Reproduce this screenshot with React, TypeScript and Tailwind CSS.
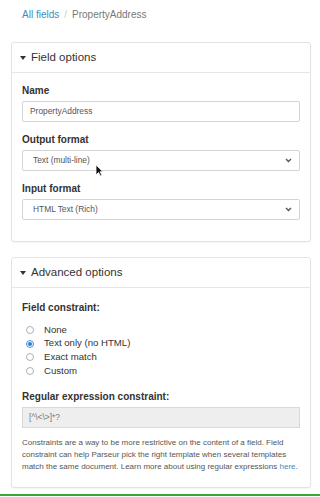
import React from "react";

function Caret() {
  return (
    <svg width="6" height="4" viewBox="0 0 6 4" className="mr-[5px] shrink-0" aria-hidden="true">
      <path d="M0 0h6L3 4z" fill="#333" />
    </svg>
  );
}

function Chevron() {
  return (
    <svg width="7" height="5" viewBox="0 0 7 5" aria-hidden="true">
      <path d="M1 1l2.5 2.5L6 1" fill="none" stroke="#555" strokeWidth="1.4" />
    </svg>
  );
}

function Panel({ title, children }: { title: string; children: React.ReactNode }) {
  return (
    <section className="rounded-[3px] border border-[#e3e3e3] bg-white shadow-[0_1px_1px_rgba(0,0,0,0.04)]">
      <header className="flex h-[30px] items-center border-b border-[#e6e6e6] pl-[8px] text-[11.5px] text-[#333]">
        <Caret />
        {title}
      </header>
      <div className="px-[10px]">{children}</div>
    </section>
  );
}

function Label({ children }: { children: React.ReactNode }) {
  return <div className="text-[10px] font-bold leading-[13px] text-[#333]">{children}</div>;
}

function FakeSelect({ value }: { value: string }) {
  return (
    <div className="mt-[4px] flex h-[21px] items-center justify-between rounded-[2px] border border-[#d4d4d4] bg-white pl-[10px] pr-[7px] text-[8.4px] text-[#555]">
      <span>{value}</span>
      <Chevron />
    </div>
  );
}

const options = ["None", "Text only (no HTML)", "Exact match", "Custom"];

export default function App() {
  return (
    <div className="relative h-[497px] w-[320px] overflow-hidden bg-white font-['Liberation_Sans',Arial,sans-serif]">
      {/* breadcrumb */}
      <nav className="flex h-[29px] items-center pl-[22px] text-[10px] text-[#777]">
        <span className="text-[#3a8cc0]">All fields</span>
        <span className="mx-[5px] text-[#ccc]">/</span>
        <span>PropertyAddress</span>
      </nav>

      <div className="mt-[13px] flex flex-col gap-[15px] pl-[11px] pr-[9px]">
        <Panel title="Field options">
          <div className="pb-[21px] pt-[11px]">
            <Label>Name</Label>
            <div className="mt-[4px] flex h-[21px] items-center rounded-[2px] border border-[#d4d4d4] pl-[7px] text-[8.4px] text-[#555]">
              PropertyAddress
            </div>
            <div className="mt-[11px]">
              <Label>Output format</Label>
              <FakeSelect value="Text (multi-line)" />
            </div>
            <div className="mt-[11px]">
              <Label>Input format</Label>
              <FakeSelect value="HTML Text (Rich)" />
            </div>
          </div>
        </Panel>

        <Panel title="Advanced options">
          <div className="pb-[14px] pt-[13px]">
            <Label>Field constraint:</Label>
            <ul className="mt-[9px] flex flex-col">
              {options.map((o, i) => (
                <li key={o} className="flex h-[13.7px] items-center text-[9.6px] text-[#333]">
                  <span
                    className={
                      i === 1
                        ? "ml-[4px] mr-[10px] flex h-[8px] w-[8px] items-center justify-center rounded-full border border-[#5a9ae0] bg-[#e8f1fb]"
                        : "ml-[4px] mr-[10px] h-[8px] w-[8px] rounded-full border border-[#b0b0b0] bg-white"
                    }
                  >
                    {i === 1 && <span className="h-[4px] w-[4px] rounded-full bg-[#2f7fd6]" />}
                  </span>
                  {o}
                </li>
              ))}
            </ul>
            <div className="mt-[12px]">
              <Label>Regular expression constraint:</Label>
              <div className="mt-[4px] flex h-[21px] items-center border border-[#d9d9d9] bg-[#eeeeee] pl-[6px] text-[8.4px] text-[#777]">
                [^\&lt;\&gt;]*?
              </div>
            </div>
            <p className="mt-[9px] text-[8px] leading-[12px] text-[#555]">
              Constraints are a way to be more restrictive on the content of a field. Field
              constraint can help Parseur pick the right template when several templates match
              the same document. Learn more about using regular expressions{" "}
              <span className="text-[#3a8cc0]">here</span>.
            </p>
          </div>
        </Panel>
      </div>

      {/* green bottom rule */}
      <div className="absolute bottom-[1px] left-0 h-[2px] w-full bg-[#3aa63a]" />

      {/* mouse pointer */}
      <svg
        className="absolute left-[95px] top-[164px]"
        width="9"
        height="13"
        viewBox="0 0 9 13"
        aria-hidden="true"
      >
        <path d="M1 1v10l2.5-2.5 2 3.5 1.5-.8-2-3.4H8z" fill="#111" stroke="#fff" strokeWidth="0.8" />
      </svg>
    </div>
  );
}
